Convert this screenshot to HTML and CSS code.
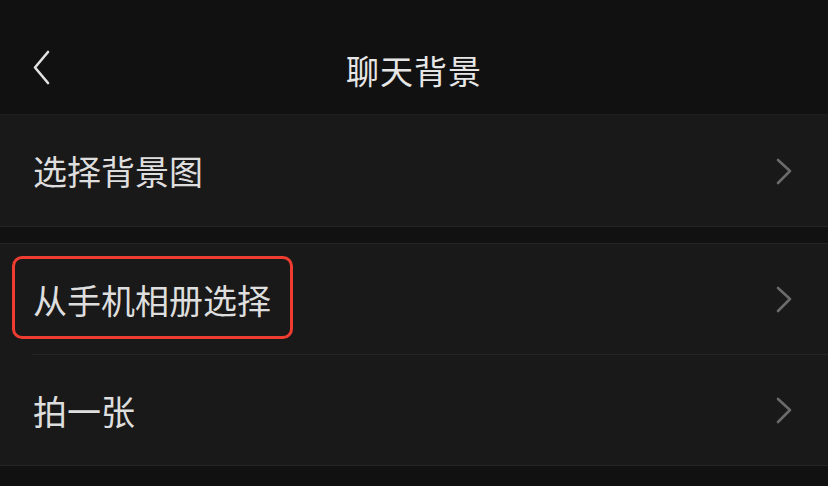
FILE: index.html
```html
<!DOCTYPE html>
<html lang="zh-CN">
<head>
    <meta charset="UTF-8">
    <meta name="viewport" content="width=device-width, initial-scale=1.0">
    <title>聊天背景</title>
    <link rel="stylesheet" href="styles.css">
</head>
<body>

<div class="header">
    <svg class="back" width="24" height="40" viewBox="0 0 24 40">
        <path d="M17 4 L4 19.5 L17 35" fill="none" stroke="#e2e2e2" stroke-width="2.6" stroke-linecap="round" stroke-linejoin="round"/>
    </svg>
    <h1>聊天背景</h1>
</div>

<div class="group">
    <div class="item">
        <span>选择背景图</span>
        <svg class="arrow" width="20" height="30" viewBox="0 0 20 30">
            <path d="M4 3 L16 14 L4 26" fill="none" stroke="#6b6b6b" stroke-width="2.6" stroke-linecap="round" stroke-linejoin="round"/>
        </svg>
    </div>
</div>

<div class="group">
    <div class="item marked">
        <span>从手机相册选择</span>
        <svg class="arrow" width="20" height="30" viewBox="0 0 20 30">
            <path d="M4 3 L16 14 L4 26" fill="none" stroke="#6b6b6b" stroke-width="2.6" stroke-linecap="round" stroke-linejoin="round"/>
        </svg>
        <div class="highlight"></div>
    </div>
    <div class="item">
        <span>拍一张</span>
        <svg class="arrow" width="20" height="30" viewBox="0 0 20 30">
            <path d="M4 3 L16 14 L4 26" fill="none" stroke="#6b6b6b" stroke-width="2.6" stroke-linecap="round" stroke-linejoin="round"/>
        </svg>
    </div>
</div>

</body>
</html>
```

FILE: styles.css
```css
body {
    margin: 0;
    background-color: #111111;
    font-family: "Noto Sans CJK SC", "Noto Sans", sans-serif;
    color: #dedede;
    height: 486px;
    overflow: hidden;
}

.header {
    height: 114px;
    border-bottom: 1px solid #1e1e1e;
    display: flex;
    align-items: center;
    justify-content: center;
    position: relative;
}

.back {
    position: absolute;
    left: 31px;
    top: 48px;
}

h1 {
    margin: 0;
    padding-top: 25px;
    font-size: 33px;
    font-weight: 400;
    color: #e6e6e6;
    letter-spacing: 1px;
}

.group {
    background-color: #191919;
    border-top: 1px solid #252525;
    border-bottom: 1px solid #252525;
    margin-bottom: 16px;
}

.header + .group {
    border-top: none;
}

.item {
    height: 110px;
    display: flex;
    align-items: center;
    justify-content: space-between;
    padding: 0 34px 0 33px;
    font-size: 34px;
    position: relative;
}

.item + .item {
    border-top: 1px solid #252525;
    margin-left: 32px;
    padding-left: 1px;
}

.header + .group .item {
    height: 111px;
}

.arrow {
    margin-top: 2px;
}

.highlight {
    position: absolute;
    left: 12px;
    top: 12px;
    width: 275px;
    height: 77px;
    border: 3px solid #ee3d30;
    border-radius: 10px;
}
```
